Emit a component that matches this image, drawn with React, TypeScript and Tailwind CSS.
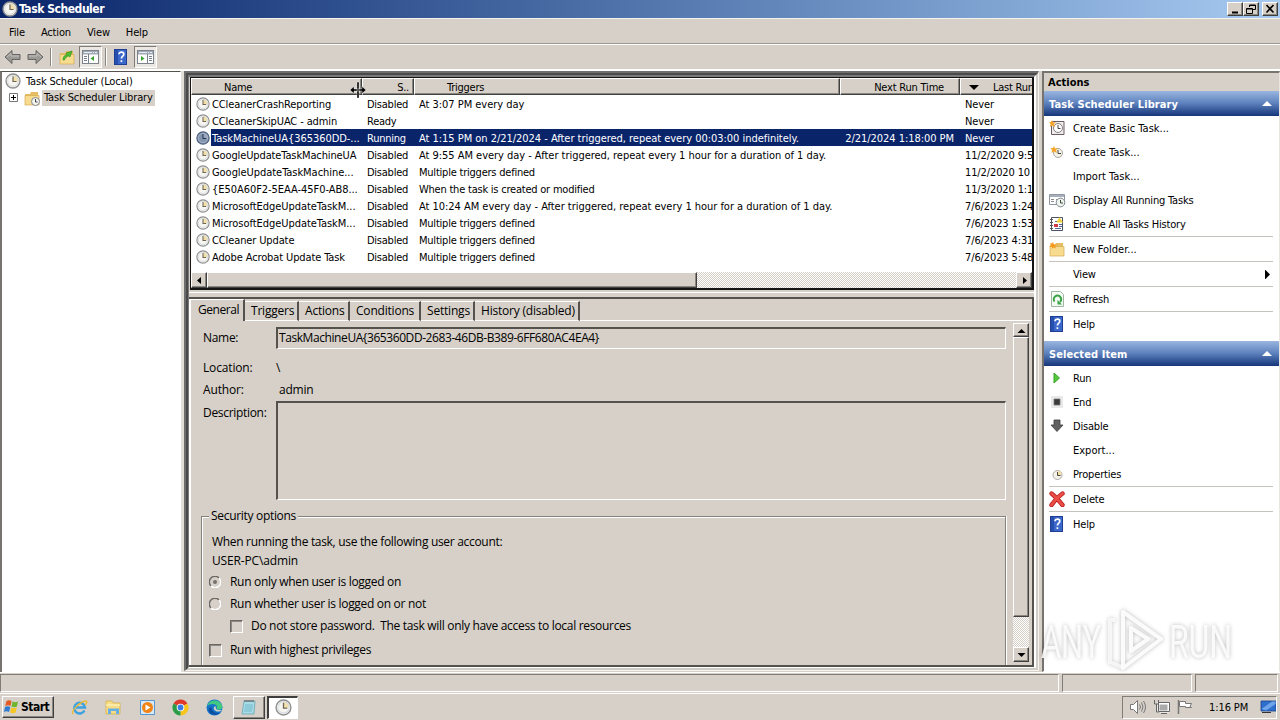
import type { ReactNode } from "react";

const RAISED =
  "border border-t-white border-l-white border-r-[#404040] border-b-[#404040] bg-[#d6d0c8] shadow-[inset_-1px_-1px_0_#8a8680]";
const SUNKEN =
  "border border-t-[#807c76] border-l-[#807c76] border-r-white border-b-white";
const DITHER =
  "bg-[repeating-conic-gradient(#ffffff_0_25%,#d6d0c8_0_50%)] bg-[length:2px_2px]";
const SEGOE = "font-['Open_Sans',sans-serif] text-[12px] leading-4 tracking-[-0.31px]";

const TASKS = [
  ["CCleanerCrashReporting", "Disabled", "At 3:07 PM every day", "", "Never"],
  ["CCleanerSkipUAC - admin", "Ready", "", "", "Never"],
  [
    "TaskMachineUA{365360DD-...",
    "Running",
    "At 1:15 PM on 2/21/2024 - After triggered, repeat every 00:03:00 indefinitely.",
    "2/21/2024 1:18:00 PM",
    "Never",
  ],
  [
    "GoogleUpdateTaskMachineUA",
    "Disabled",
    "At 9:55 AM every day - After triggered, repeat every 1 hour for a duration of 1 day.",
    "",
    "11/2/2020 9:55",
  ],
  ["GoogleUpdateTaskMachine...", "Disabled", "Multiple triggers defined", "", "11/2/2020 10"],
  ["{E50A60F2-5EAA-45F0-AB8...", "Disabled", "When the task is created or modified", "", "11/3/2020 1:1"],
  [
    "MicrosoftEdgeUpdateTaskM...",
    "Disabled",
    "At 10:24 AM every day - After triggered, repeat every 1 hour for a duration of 1 day.",
    "",
    "7/6/2023 1:24",
  ],
  ["MicrosoftEdgeUpdateTaskM...", "Disabled", "Multiple triggers defined", "", "7/6/2023 1:53"],
  ["CCleaner Update", "Disabled", "Multiple triggers defined", "", "7/6/2023 4:31"],
  ["Adobe Acrobat Update Task", "Disabled", "Multiple triggers defined", "", "7/6/2023 5:48"],
];

function Clock({ size = 16, dark = false }: { size?: number; dark?: boolean }) {
  return (
    <svg width={size} height={size} viewBox="0 0 16 16" className="shrink-0">
      <circle cx="8" cy="8" r="7" fill={dark ? "#8494ac" : "#f6f5f0"} stroke={dark ? "#4c5c7c" : "#8e8e8e"} strokeWidth="1.3" />
      <path d="M8 8V2.2A5.8 5.8 0 0 1 13.8 8z" fill={dark ? "#9ba7b8" : "#f3dfa8"} />
      <circle cx="8" cy="8" r="5.3" fill="none" stroke={dark ? "#a8b4c8" : "#d5dbe2"} strokeWidth="1" />
      <path d="M8 3.5V8.5H11.6" fill="none" stroke={dark ? "#24385f" : "#6d6658"} strokeWidth="1.2" />
    </svg>
  );
}

function HelpIcon() {
  return (
    <svg width="16" height="16" viewBox="0 0 16 16">
      <rect x="1.5" y=".5" width="12" height="15" fill="#3c68cc" stroke="#1f3f94" />
      <path d="M2 1h3v14H2z" fill="#274fae" />
      <path d="M6 5.2C6 2.5 10.8 2.5 10.8 5.2C10.8 7.2 8.4 7.2 8.4 9.6M8.4 11.3v1.8" fill="none" stroke="#fff" strokeWidth="1.7" />
    </svg>
  );
}

function FolderIcon({ kind }: { kind: "new" | "up" | "clock" }) {
  return (
    <svg width="16" height="16" viewBox="0 0 16 16">
      <path d="M1 4h5l1-2h7v13H1z" fill="#e6bd62" />
      <path d="M1 5.5h14V15H1z" fill="#f7dc90" stroke="#d6ab52" strokeWidth=".7" />
      {kind === "new" && <path d="M4 1l1 2.500L8 3 6 5 7 7.500 4.500 6.500 3 8V6L0 6l2-1.500L1 2l2 .5z" fill="#f59a1c" />}
      {kind === "up" && <path d="M4 11C4 7 6 6 8 6L7 4l6-2-2 6-1.500-1C8 7.500 6 9 5.500 11z" fill="#4fbd31" stroke="#2c8a1d" strokeWidth=".6" />}
      {kind === "clock" && (
        <g>
          <circle cx="11.500" cy="11.500" r="4" fill="#f4f4f0" stroke="#85888e" />
          <path d="M11.500 9v3h2" fill="none" stroke="#444" />
        </g>
      )}
    </svg>
  );
}

function PaneIcon({ side }: { side: "left" | "right" }) {
  return (
    <svg width="17" height="16" viewBox="0 0 17 16">
      <rect x=".5" y="1.500" width="16" height="13" fill="#fff" stroke="#7c838c" />
      <path d="M1 2h15v3.500H1z" fill="#a3abb6" />
      <path d="M2 3.500h8M11 3.500h1M13 3.500h2" stroke="#e6e9ee" />
      <path d={side === "left" ? "M6.500 5v9M2 7.500h3M2 9.500h3M2 11.500h3" : "M10.500 5v9M12 7.500h3M12 9.500h3M12 11.500h3"} stroke="#77808c" />
      <path d={side === "left" ? "M12 7v5L8.500 9.500z" : "M4 7v5L7.500 9.500z"} fill="#36a52c" />
    </svg>
  );
}

function ToolArrow({ flip = false }: { flip?: boolean }) {
  return (
    <svg width="17" height="16" viewBox="0 0 17 16" className={flip ? "-scale-x-100" : ""}>
      <path d="M1 8l7-6.500v4h8v5H8v4z" fill="#9c9a97" stroke="#676563" />
      <path d="M3 8l4-3.500V7h8" fill="none" stroke="#c2c0bc" />
    </svg>
  );
}

function ActionIcon({ name }: { name: string }) {
  switch (name) {
    case "Create Basic Task...":
      return (
        <svg width="16" height="16" viewBox="0 0 16 16">
          <path d="M3 1.500h12v13H2.500V5" fill="#f0edeb" stroke="#6d5c66" />
          <circle cx="9" cy="8" r="4.500" fill="#fff" stroke="#857e80" />
          <path d="M9 5v3.500h2.500" fill="none" stroke="#444" />
          <path d="M3 0l1 2.500L7 2 5 4l1 3-3-1.500L1 7l.5-3L0 2h2z" fill="#f5a52b" />
        </svg>
      );
    case "Create Task...":
      return (
        <svg width="16" height="16" viewBox="0 0 16 16">
          <circle cx="9" cy="9" r="4.500" fill="#f4f1e6" stroke="#a5a5a5" />
          <path d="M9 6v3.500h3" fill="none" stroke="#444" />
          <path d="M5 2l1 2.500L9 4 7 6l1 3-3-1.500L2.500 9 3 6 1.500 4H4z" fill="#f5a52b" />
        </svg>
      );
    case "Display All Running Tasks":
      return (
        <svg width="17" height="16" viewBox="0 0 17 16">
          <path d="M.5 2.500h15v10H.5z" fill="#fff" stroke="#9097a0" />
          <path d="M1 3h14v2H1z" fill="#a7b0ba" />
          <path d="M2 7.500h3M2 9.500h3M7 7.500h3" stroke="#8c8c8c" />
          <circle cx="11.500" cy="10.500" r="4.300" fill="#f1f5f1" stroke="#7e868c" />
          <path d="M11.500 8v3h2.500" fill="none" stroke="#394b39" />
        </svg>
      );
    case "Enable All Tasks History":
      return (
        <svg width="16" height="16" viewBox="0 0 16 16">
          <path d="M2.500 1.500h11v13h-11z" fill="#fff" stroke="#4c5266" />
          <path d="M1 3.500h3M1 6.500h3M1 9.500h3M1 12.500h3" stroke="#555" />
          <path d="M6 5.500h3M6 12.500h6M6 10.500h1" stroke="#5a68a0" />
          <path d="M10.500 1l3.500 5.500H7.500z" fill="#f3d237" />
          <path d="M5 8h4v3H5z" fill="#cf3b48" />
          <path d="M10 8.500h3M10 10.500h3" stroke="#56608f" />
        </svg>
      );
    case "New Folder...":
      return <FolderIcon kind="new" />;
    case "Refresh":
      return (
        <svg width="16" height="16" viewBox="0 0 16 16">
          <path d="M2.500.5h9l3 3v12h-12z" fill="#f4faf4" stroke="#9fb5a0" />
          <path d="M5.500 10.500A3.700 3.700 0 1 1 11 11" fill="none" stroke="#37a344" strokeWidth="2" />
          <path d="M8.500 9v4.500h4.500z" fill="#37a344" />
        </svg>
      );
    case "Help":
      return <HelpIcon />;
    case "Run":
      return (
        <svg width="16" height="16" viewBox="0 0 16 16">
          <path d="M5 3v10l5.500-5z" fill="#55c83c" stroke="#36a326" />
        </svg>
      );
    case "End":
      return (
        <svg width="16" height="16" viewBox="0 0 16 16">
          <path d="M2 2h12v12H2z" fill="#e9e9e9" />
          <path d="M5 5h6v6H5z" fill="#3a3a3a" stroke="#777" strokeWidth=".8" />
        </svg>
      );
    case "Disable":
      return (
        <svg width="16" height="16" viewBox="0 0 16 16">
          <path d="M5 2h6v5h3l-6 6.500L2 7h3z" fill="#606060" stroke="#3c3c3c" strokeWidth=".8" />
        </svg>
      );
    case "Properties":
      return (
        <svg width="16" height="16" viewBox="0 0 16 16">
          <circle cx="8.500" cy="9" r="4.500" fill="#f5f2ea" stroke="#aaa" />
          <path d="M8.500 5a4 4 0 0 1 4 4h-4z" fill="#f5dfa4" />
          <path d="M8.500 6v3.500h3" fill="none" stroke="#444" />
        </svg>
      );
    case "Delete":
      return (
        <svg width="16" height="16" viewBox="0 0 16 16">
          <path d="M2.500 2.500Q7 6 13.500 14M13.500 2.500Q7 7 2.500 14" fill="none" stroke="#b81f1f" strokeWidth="4.400" strokeLinecap="round" />
          <path d="M2.500 2.500Q7 6 13.500 14M13.500 2.500Q7 7 2.500 14" fill="none" stroke="#ea4d46" strokeWidth="2.800" strokeLinecap="round" />
        </svg>
      );
    default:
      return null;
  }
}

function Arrow({ d }: { d: string }) {
  return (
    <svg width="9" height="9" viewBox="0 0 9 9">
      <path d={d} fill="#000" />
    </svg>
  );
}

function ActionRow({ name }: { name: string }) {
  return (
    <div className="flex h-6 items-center pr-[7px] pl-[5px]">
      <span className="w-6">
        <ActionIcon name={name} />
      </span>
      <span className={name.endsWith("...") ? "flex-1 pt-0.5 tracking-[0px]" : "flex-1 pt-0.5 tracking-[-0.18px]"}>
        {name}
      </span>
      {name === "View" && <Arrow d="M2 -.5l5 5-5 5z" />}
    </div>
  );
}

function ActionSection({ title, groups }: { title: string; groups: string[][] }) {
  return (
    <div>
      <div className="flex h-[25px] items-center justify-between bg-linear-to-b from-[#9ab6e0] via-[#5c80bc] to-[#16357a] pr-[7px] pl-[5px] font-bold tracking-[0.1px] text-white">
        <span className="pt-0.5">{title}</span>
        <svg width="10" height="5" viewBox="0 0 10 5">
          <path d="M0 5l5-5 5 5z" fill="#fff" />
        </svg>
      </div>
      {groups.map((group, i) => (
        <div key={i}>
          {i > 0 && <div className="mr-[6px] ml-[5px] h-px bg-[#c6c3be]" />}
          {group.map((name) => (
            <ActionRow key={name} name={name} />
          ))}
        </div>
      ))}
    </div>
  );
}

function ColHead({ className, children }: { className: string; children?: ReactNode }) {
  return (
    <div className={`flex h-[17px] shrink-0 items-center pt-0.5 whitespace-nowrap ${RAISED} ${className}`}>{children}</div>
  );
}

function TaskList() {
  return (
    <div className="ml-px flex h-[213px] flex-col overflow-hidden border-2 border-t border-l border-[#151515] bg-white">
      <div className="flex">
        <ColHead className="w-[171px] pl-8">Name</ColHead>
        <ColHead className="w-[52px] justify-end pr-1">S..</ColHead>
        <ColHead className="w-[426px] pl-8">Triggers</ColHead>
        <ColHead className="w-[120px] justify-end pr-[15px] tracking-[-0.2px]">Next Run Time</ColHead>
        <ColHead className="w-[120px] pl-2">
          <svg width="10" height="5" viewBox="0 0 10 5" className="mr-[14px]">
            <path d="M0 0h10L5 5z" />
          </svg>
          Last Run
        </ColHead>
      </div>
      <div className="flex-1">
        {TASKS.map(([name, state, trigger, next, last], i) => {
          const selected = i === 2;
          return (
            <div key={i} className="flex h-[17px] items-center whitespace-nowrap">
              <span className="flex w-5 shrink-0 justify-end pr-px">
                <Clock size={14} dark={selected} />
              </span>
              <div
                className={
                  selected
                    ? "flex h-[17px] shrink-0 items-center bg-[#0a246a] pt-0.5 text-white"
                    : "flex h-[17px] shrink-0 items-center pt-0.5"
                }
              >
                <span className={name.endsWith("...") ? "w-[156px] shrink-0 pl-px tracking-[-0.05px]" : "w-[156px] shrink-0 pl-px tracking-[-0.12px]"}>
                  {name}
                </span>
                <span className="w-[52px] shrink-0">{state}</span>
                <span className={trigger.startsWith("At") ? "w-[421px] shrink-0 tracking-[-0.03px]" : "w-[421px] shrink-0 tracking-[-0.22px]"}>
                  {trigger}
                </span>
                <span className="w-[114px] shrink-0 text-right tracking-[-0.05px]">{next}</span>
                <span className="w-[100px] shrink-0 pl-[11px] tracking-[-0.12px]">{last}</span>
              </div>
            </div>
          );
        })}
      </div>
      <div className={`flex h-4 shrink-0 ${DITHER}`}>
        <div className={`flex w-4 items-center justify-center ${RAISED}`}>
          <Arrow d="M6 1v7L2 4.500z" />
        </div>
        <div className={`w-[490px] ${RAISED}`} />
        <div className="flex-1" />
        <div className={`flex w-4 items-center justify-center ${RAISED}`}>
          <Arrow d="M3 1v7l4-3.500z" />
        </div>
      </div>
    </div>
  );
}

const TABS = [
  ["Triggers", "w-[54px]"],
  ["Actions", "w-[51px]"],
  ["Conditions", "w-[71px]"],
  ["Settings", "w-[54px]"],
  ["History (disabled)", "w-[105px]"],
];

function Radio({ checked = false }: { checked?: boolean }) {
  return (
    <svg width="12" height="12" viewBox="0 0 12 12" className="mr-[9px]">
      <path d="M2 10A5.500 5.500 0 1 1 10 2" fill="none" stroke="#6b6763" strokeWidth="1.400" />
      <path d="M10 2A5.500 5.500 0 0 1 2 10" fill="none" stroke="#fff" strokeWidth="1.400" />
      {checked && <circle cx="6" cy="6" r="2" fill="#75716c" />}
    </svg>
  );
}

function Check() {
  return (
    <span className="size-[13px] border border-t-[#6b6763] border-l-[#6b6763] border-r-white border-b-white shadow-[inset_1px_1px_0_#8c8883]" />
  );
}

function Details() {
  return (
    <div className={`flex h-[370px] flex-col border-t-2 border-r-2 border-b-2 border-[#55514d] ${SEGOE}`}>
      <div className="flex h-[22px] items-end border-l-2 border-white tracking-[-0.2px]">
        <div className="h-[22px] w-[54px] border-t border-r-2 border-t-white border-r-[#55514d] pl-[7px] leading-[19px] tracking-[-0.45px]">
          General
        </div>
        {TABS.map(([label, width]) => (
          <div
            key={label}
            className={`${width} h-[20px] border-t border-r-2 border-b border-t-white border-r-[#55514d] border-b-white pl-[6px] leading-[18px] whitespace-nowrap`}
          >
            {label}
          </div>
        ))}
        <div className="h-px flex-1 bg-white" />
      </div>
      <div className="flex min-h-0 flex-1 border-l-2 border-white">
        <div className="flex min-w-0 flex-1 flex-col overflow-hidden pl-3">
          <div className="mt-[6px] flex h-[22px] items-center">
            <span className="w-[73px]">Name:</span>
            <div className="h-[22px] w-[730px] border-t-2 border-r border-b border-l-2 border-t-[#55514d] border-r-white border-b-white border-l-[#55514d] pl-px leading-[18px] tracking-[-0.42px]">
              TaskMachineUA&#123;365360DD-2683-46DB-B389-6FF680AC4EA4&#125;
            </div>
          </div>
          <div className="mt-[11px] flex">
            <span className="w-[73px] tracking-[-0.15px]">Location:</span>\
          </div>
          <div className="mt-[6px] flex">
            <span className="w-[76px] tracking-[-0.15px]">Author:</span>
            <span className="tracking-[-0.2px]">admin</span>
          </div>
          <div className="mt-[3px] flex">
            <span className="w-[73px] pt-1">Description:</span>
            <div className="h-[99px] w-[730px] border-t-2 border-r border-b border-l-2 border-t-[#55514d] border-r-white border-b-white border-l-[#55514d]" />
          </div>
          <fieldset className="mt-[8px] -ml-0.5 h-[170px] w-[805px] shrink-0 border border-[#85817c] pl-[10px] shadow-[inset_1px_1px_0_#fff,1px_0_0_#fff]">
            <legend className="-ml-[3px] bg-[#d6d0c8] px-0.5">Security options</legend>
            <div className="mt-[10px]">When running the task, use the following user account:</div>
            <div className="mt-[3px] tracking-[-0.15px]">USER-PC\admin</div>
            <div className="mt-[5px] -ml-1 flex items-center pl-px">
              <Radio checked />
              Run only when user is logged on
            </div>
            <div className="mt-[6px] -ml-1 flex items-center pl-px">
              <Radio />
              Run whether user is logged on or not
            </div>
            <div className="mt-[6px] flex items-center gap-[8px] pl-[18px] whitespace-pre">
              <Check />
              {"Do not store password.  The task will only have access to local resources"}
            </div>
            <div className="mt-[8px] -ml-[3px] flex items-center gap-[8px]">
              <Check />
              Run with highest privileges
            </div>
          </fieldset>
        </div>
        <div className={`mt-[2px] mr-[3px] mb-[3px] flex w-4 flex-col ${DITHER}`}>
          <div className={`flex h-[14px] items-center justify-center ${RAISED}`}>
            <Arrow d="M.5 7h8L4.500 3z" />
          </div>
          <div className={`h-[280px] ${RAISED}`} />
          <div className="flex-1" />
          <div className={`flex h-[15px] items-center justify-center ${RAISED}`}>
            <Arrow d="M.5 3h8L4.500 7z" />
          </div>
        </div>
      </div>
    </div>
  );
}

function TitleButton({ children }: { children: ReactNode }) {
  return (
    <div className={`flex h-[14px] w-4 items-center justify-center ${RAISED}`}>
      <svg width="12" height="12" viewBox="0 0 12 12" fill="none" stroke="#000">
        {children}
      </svg>
    </div>
  );
}

function TitleBar() {
  return (
    <div className="flex h-[18px] items-center bg-linear-to-r from-[#0a246a] to-[#a6caf0] pr-0.5 pl-0.5 text-[12px] font-bold tracking-[-0.45px] text-white">
      <Clock size={16} />
      <span className="ml-px flex-1">Task Scheduler</span>
      <TitleButton>
        <path d="M3 9.500h6" strokeWidth="2" />
      </TitleButton>
      <TitleButton>
        <path d="M4.500 4V2h6v4.500H8M4.500 2.500h6M1.500 5.500h6v5h-6zM1.500 6h6" />
      </TitleButton>
      <span className="w-[3px]" />
      <TitleButton>
        <path d="M2.500 2l7 7.500M9.500 2l-7 7.500" strokeWidth="1.700" />
      </TitleButton>
    </div>
  );
}

function Toolbar() {
  return (
    <div className="flex h-[24px] items-center border-t border-white pl-1">
      <ToolArrow />
      <span className="w-[6px]" />
      <ToolArrow flip />
      <span className="mr-[7px] ml-[6px] h-[18px] border-r border-l border-l-[#8a8680] border-r-white" />
      <FolderIcon kind="up" />
      <span className={`ml-[4px] flex h-[22px] w-[23px] items-center justify-center bg-[#ebe8e3] ${SUNKEN}`}>
        <PaneIcon side="left" />
      </span>
      <span className="mr-[6px] ml-[3px] h-[18px] border-r border-l border-l-[#8a8680] border-r-white" />
      <HelpIcon />
      <span className={`ml-[5px] flex h-[22px] w-[23px] items-center justify-center bg-[#ebe8e3] ${SUNKEN}`}>
        <PaneIcon side="right" />
      </span>
    </div>
  );
}

function Watermark() {
  return (
    <svg width="200" height="66" viewBox="0 0 200 66" className="absolute top-[607px] left-[1038px] drop-shadow-[0_0_2px_rgba(0,0,0,0.3)]">
      <g fill="#fff" fillOpacity=".85" fontFamily="Roboto, sans-serif" fontSize="46" fontWeight="400">
        <text x="3" y="51" textLength="60" lengthAdjust="spacingAndGlyphs">ANY</text>
        <text x="131" y="51" textLength="63" lengthAdjust="spacingAndGlyphs">RUN</text>
      </g>
      <g fill="none" stroke="#fff" strokeWidth="4" strokeLinejoin="round">
        <path d="M85 5l38 27-38 29zM93 21l17 11-17 12z" strokeOpacity=".9" />
        <path d="M77 13h-5v42l12 5" strokeOpacity=".7" />
      </g>
    </svg>
  );
}

function Taskbar() {
  return (
    <div className="flex h-[27px] items-center border-t border-white pr-[3px] pl-0.5">
      <div className={`flex h-[22px] w-[52px] items-center gap-px text-[12px] font-bold tracking-[-0.5px] ${RAISED}`}>
        <svg width="17" height="16" viewBox="0 0 17 16" className="shrink-0">
          <path d="M3.500 2C5 1 7 1 8.500 2L7.500 7C6 6 4 6 2.200 7z" fill="#e45a22" />
          <path d="M9.500 2.500c2 1 3.500 1 5.500 0L14 7.500c-2 1-3.500 1-5.500 0z" fill="#70b52f" />
          <path d="M2 8c1.800-1 3.500-1 5.300 0L6 13c-1.500-1-3.500-1-5 0z" fill="#2f7bd0" />
          <path d="M8.200 8.500c2 1 3.500 1 5.500 0l-1 5c-2 1-3.500 1-5.500 0z" fill="#f6c622" />
        </svg>
        Start
      </div>
      <div className="ml-[17px] flex items-center gap-[17px]">
        <svg width="17" height="17" viewBox="0 0 17 17">
          <path d="M13.500 11.500A5.400 5.400 0 1 1 14 8.500H5" fill="none" stroke="#3ba1e0" strokeWidth="2.400" />
          <path d="M2 15C-1 12 10 2 15 2c2 1 0 3-1 4" fill="none" stroke="#edb932" strokeWidth="1.300" />
        </svg>
        <svg width="17" height="17" viewBox="0 0 17 17">
          <path d="M1 2h6l1 2h7v11H1z" fill="#f5dc86" stroke="#d9b24a" strokeWidth=".8" />
          <path d="M3 15V9.500h11V15h-3v-3H6v3z" fill="#68aee2" />
          <path d="M1 6h14" stroke="#fff6c8" />
        </svg>
        <svg width="17" height="17" viewBox="0 0 17 17">
          <path d="M1.500 1.500h14v14h-14z" fill="#d8e9f8" stroke="#5995cd" />
          <circle cx="8.500" cy="8.500" r="5.500" fill="#f08417" />
          <path d="M6.500 5.500v6l5-3z" fill="#fff" />
        </svg>
        <svg width="17" height="17" viewBox="0 0 17 17" className="-ml-px">
          <path d="M8.500 8.500L1.570 4.500A8 8 0 0 1 15.430 4.500z" fill="#dd3a2c" />
          <path d="M8.500 8.500L15.430 4.500A8 8 0 0 1 8.500 16.500z" fill="#f8c51f" />
          <path d="M8.500 8.500V16.500A8 8 0 0 1 1.570 4.500z" fill="#2c9d47" />
          <circle cx="8.500" cy="8.500" r="3.800" fill="#fff" />
          <circle cx="8.500" cy="8.500" r="2.900" fill="#3b7de8" />
        </svg>
        <svg width="17" height="17" viewBox="0 0 17 17">
          <circle cx="8.500" cy="8.500" r="8" fill="#1574c8" />
          <path d="M1 7C3 0 14-1 16.500 7.500c0 4-5 4-6 2C13 4 4 4 1 7z" fill="#43c882" />
          <path d="M6 8c-1 4 3 7 8 5.500C9 18 1 15 3 9z" fill="#0d4e9f" />
          <path d="M8 8c-1 2 1 5 5 4.500 2 0 3-1 3-1L13 11c-3 0-4-2-3-4z" fill="#d6d0c8" />
        </svg>
      </div>
      <div className={`ml-[10px] flex h-[23px] w-8 items-center justify-center ${RAISED}`}>
        <svg width="16" height="17" viewBox="0 0 16 17">
          <path d="M3 2h11l-1 13H1z" fill="#a7dbe6" stroke="#6aa5b5" strokeWidth=".8" />
          <path d="M4 6h8M4 8h8M3.500 10h8M3 12h8" stroke="#75b9ca" />
          <path d="M4 1v2M6 1v2M8 1v2M10 1v2M12 1v2" stroke="#555" />
        </svg>
      </div>
      <div className="ml-0.5 flex h-[23px] w-[31px] items-center justify-center border-t-2 border-r border-b border-l-2 border-t-[#403e3c] border-r-white border-b-white border-l-[#403e3c] bg-white">
        <Clock size={17} />
      </div>
      <div className="flex-1" />
      <div className={`flex h-[23px] w-[155px] items-center pl-[6px] ${SUNKEN}`}>
        <svg width="17" height="16" viewBox="0 0 17 16" fill="none" stroke="#777">
          <path d="M1.500 5.500h3l4-4v13l-4-4h-3z" fill="#fff" />
          <path d="M10.500 5.500q2 2.500 0 5M12.500 3.500q3 4.500 0 9M14.500 2q4 6 0 12" />
        </svg>
        <svg width="17" height="16" viewBox="0 0 17 16" fill="none" stroke="#666" className="ml-[7px]">
          <path d="M5.500 4.500h10v8h-10z" fill="#aaa" stroke="#fff" strokeWidth="2" />
          <path d="M5.500 3.500h11v9h-11zM8 14.500h6" />
          <path d="M1.500 1v4h4V1M3.500 5v8h3" />
        </svg>
        <svg width="17" height="16" viewBox="0 0 17 16" className="ml-[7px]">
          <path d="M1.500 1v14" stroke="#777" strokeWidth="1.500" />
          <path d="M2.500 2.500h6v2h6l-1.500 3 1.500 1h-6v-1h-6z" fill="#fff" stroke="#777" />
        </svg>
        <span className="ml-[15px] flex-1 pt-0.5 tracking-[-0.1px] whitespace-nowrap">1:16 PM</span>
        <svg width="16" height="14" viewBox="0 0 16 14">
          <path d="M1 1h15v10H1z" fill="#2f6fcd" stroke="#173f87" strokeWidth=".8" />
          <path d="M1.500 9L12 1.500h3.500V4L6 10.500z" fill="#6ea5ea" />
          <path d="M2 12.500h9" stroke="#333" />
        </svg>
      </div>
    </div>
  );
}

export default function App() {
  return (
    <div className="relative flex h-[720px] w-[1280px] flex-col overflow-hidden bg-[#d6d0c8] font-['DejaVu_Sans_Condensed','DejaVu_Sans',sans-serif] text-[11px] leading-[14px] tracking-[-0.25px] text-black">
      <TitleBar />
      <div className="flex h-[26px] items-center gap-[16px] border-t border-b border-t-[#f4f2ee] border-b-[#9b9792] pt-[3px] pl-[9px] tracking-[-0.15px]">
        <span>File</span>
        <span>Action</span>
        <span>View</span>
        <span>Help</span>
      </div>
      <Toolbar />
      <div className="h-[3px] border-b-2 border-white" />
      <div className="flex h-[601px]">
        <div className="w-[181px] border-t border-r border-l-2 border-t-[#55514d] border-r-white border-l-[#77736f] bg-white pl-[3px]">
          <div className="flex h-[18px] items-center gap-[4px]">
            <Clock size={16} />
            <span className="ml-px pt-0.5 tracking-[-0.17px]">Task Scheduler (Local)</span>
          </div>
          <div className="flex h-[15px] items-center">
            <svg width="9" height="9" viewBox="0 0 9 9" className="ml-[4px]">
              <path d="M.5.5h8v8h-8z" fill="#fff" stroke="#777" />
              <path d="M2 4.500h5M4.500 2v5" stroke="#000" />
            </svg>
            <span className="ml-[6px]">
              <FolderIcon kind="clock" />
            </span>
            <span className="ml-[2px] h-4 bg-[#d6d0c8] px-[2px] leading-4 tracking-[-0.13px]">Task Scheduler Library</span>
          </div>
        </div>
        <div className="w-[3px] bg-[#e2deda]" />
        {/* stacked bevels around the result and preview panes */}
        <div className="h-[600px] w-[855px] border-t-2 border-r border-b border-l-2 border-t-[#6e6e6e] border-r-[#f6f4f2] border-b-[#f6f4f2] border-l-[#6e6e6e]">
          <div className="h-[597px] border-2 border-t-[#4a4a4a] border-r-[#d0ccc6] border-b-[#d0ccc6] border-l-[#4a4a4a]">
            <div className="h-[593px] border-t-2 border-r-2 border-b border-l border-t-[#7a7a7a] border-r-white border-b-white border-l-[#7a7a7a]">
              <TaskList />
              <div className="mt-0.5 mb-px h-[4px] border-t border-white" />
              <Details />
            </div>
          </div>
        </div>
        <div className="w-[3px]" />
        <div className="flex-1 border-t-2 border-r border-b border-l-2 border-t-[#77736f] border-r-[#e8e5e1] border-b-white border-l-[#77736f] bg-white">
          <div className="h-[18px] bg-[#d6d0c8] pl-[4px] leading-[19px] font-bold tracking-[0px]">Actions</div>
          <ActionSection
            title="Task Scheduler Library"
            groups={[
              [
                "Create Basic Task...",
                "Create Task...",
                "Import Task...",
                "Display All Running Tasks",
                "Enable All Tasks History",
              ],
              ["New Folder..."],
              ["View"],
              ["Refresh"],
              ["Help"],
            ]}
          />
          <div className="h-[5px]" />
          <ActionSection
            title="Selected Item"
            groups={[["Run", "End", "Disable", "Export...", "Properties"], ["Delete"], ["Help"]]}
          />
        </div>
      </div>
      <div className="flex h-[21px] gap-[3px] border-t border-white pt-px pr-0.5 pb-px">
        <div className={`w-[1059px] ${SUNKEN}`} />
        <div className={`w-[130px] ${SUNKEN}`} />
        <div className={`flex-1 ${SUNKEN}`} />
      </div>
      <Taskbar />
      <Watermark />
      {/* column resize cursor */}
      <svg width="18" height="18" viewBox="0 0 18 18" className="absolute top-[81px] left-[349px]">
        <path d="M8 1h2v16H8zM1 9l4-3.500V8h8V5.500L17 9l-4 3.500V10H5v2.500z" fill="#000" stroke="#fff" strokeWidth=".4" />
      </svg>
    </div>
  );
}
